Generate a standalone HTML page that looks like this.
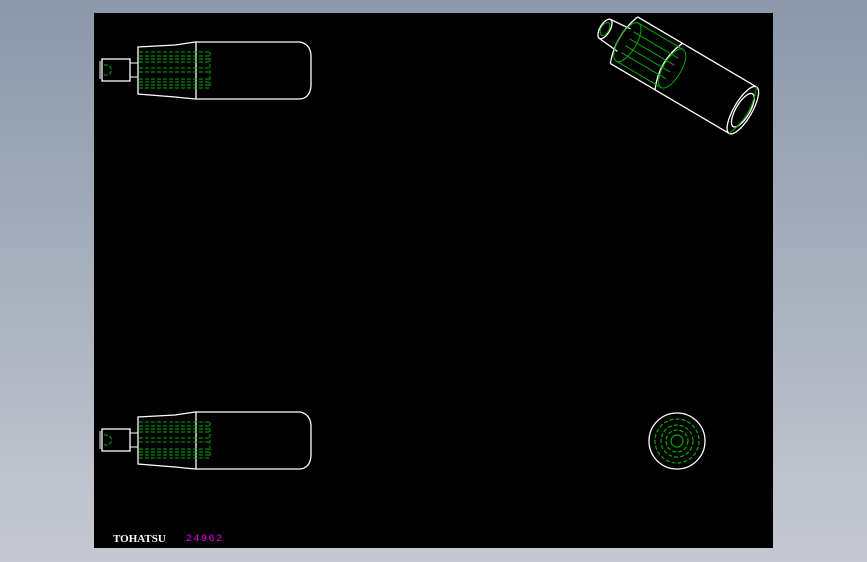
<!DOCTYPE html>
<html><head><style>
html,body{margin:0;padding:0;}
body{width:867px;height:562px;background:linear-gradient(#8a98aa,#c6c9d1);position:relative;overflow:hidden;font-family:"Liberation Sans",sans-serif;}
</style></head><body>
<svg width="867" height="562" style="position:absolute;left:0;top:0">
<rect x="94" y="13" width="679" height="535" fill="#000"/>
<defs>
<g id="h">
<rect x="102" y="59" width="28" height="22" fill="none" stroke="#fff" stroke-width="1.3"/>
<line x1="100" y1="61" x2="100" y2="79" stroke="#fff"/>
<line x1="130" y1="63" x2="138" y2="63" stroke="#fff"/>
<line x1="130" y1="77" x2="138" y2="77" stroke="#fff"/>
<path d="M138 47 L175 45 L195 42 L300 42 Q310 44 311 55 L311 86 Q310 98 300 99 L195 99 L175 97 L138 94 Z" fill="none" stroke="#fff" stroke-width="1.3"/>
<line x1="196" y1="42" x2="196" y2="99" stroke="#fff" stroke-width="1.3"/>
<g stroke="#0a0" stroke-width="1" stroke-dasharray="4,2" fill="none">
<line x1="139" y1="52" x2="210" y2="52"/><line x1="139" y1="56" x2="210" y2="56"/>
<line x1="139" y1="59" x2="210" y2="59"/><line x1="139" y1="62" x2="210" y2="62"/>
<line x1="139" y1="68" x2="210" y2="68"/><line x1="139" y1="72" x2="210" y2="72"/>
<line x1="139" y1="79" x2="210" y2="79"/><line x1="139" y1="82" x2="210" y2="82"/>
<line x1="139" y1="85" x2="210" y2="85"/><line x1="139" y1="88" x2="210" y2="88"/>
<line x1="210" y1="52" x2="210" y2="88"/>
<path d="M104 65 L109 65 L112 70 L109 75 L104 75"/>
</g>
</g>
</defs>
<use href="#h"/>
<use href="#h" y="370"/>
<g transform="translate(605,29) rotate(30.5)">
<g fill="none" stroke="#fff" stroke-width="1.3">
<ellipse cx="0" cy="0" rx="5" ry="11"/>
<line x1="0" y1="-11" x2="22" y2="-13"/>
<line x1="0" y1="11" x2="22" y2="13"/>
<line x1="22" y1="-27" x2="160" y2="-27"/>
<line x1="22" y1="27" x2="160" y2="27"/>
<ellipse cx="160" cy="0" rx="9" ry="27"/>
<ellipse cx="160" cy="0" rx="7" ry="19"/>
<path d="M22 -27 Q12 0 22 27"/>
<path d="M74 -27 Q62 0 74 27"/>
</g>
<g fill="none" stroke="#0a0" stroke-width="1">
<ellipse cx="0" cy="0" rx="4" ry="7"/>
<ellipse cx="26" cy="0" rx="9" ry="22"/>
<ellipse cx="78" cy="0" rx="9" ry="22"/>
<line x1="26" y1="-22" x2="78" y2="-22"/><line x1="26" y1="-12" x2="78" y2="-12"/>
<line x1="26" y1="-4" x2="78" y2="-4"/><line x1="26" y1="4" x2="78" y2="4"/>
<line x1="26" y1="12" x2="78" y2="12"/><line x1="26" y1="22" x2="78" y2="22"/>
<path d="M160 -27 Q171 0 160 27"/>
</g>
</g>
<circle cx="677" cy="441" r="28" fill="none" stroke="#fff" stroke-width="1.3"/>
<g fill="none" stroke="#0a0" stroke-width="1.2" stroke-dasharray="4,2">
<circle cx="677" cy="441" r="22"/><circle cx="677" cy="441" r="16"/>
<circle cx="677" cy="441" r="11"/><circle cx="677" cy="441" r="6" stroke-dasharray="none"/>
</g>
<text x="113" y="542" fill="#fff" font-family="Liberation Serif,serif" font-weight="bold" font-size="11">TOHATSU</text>
<text x="186" y="541" fill="#e0e" font-family="Liberation Mono,monospace" font-size="10" letter-spacing="1.5">24962</text>
</svg>
</body></html>
